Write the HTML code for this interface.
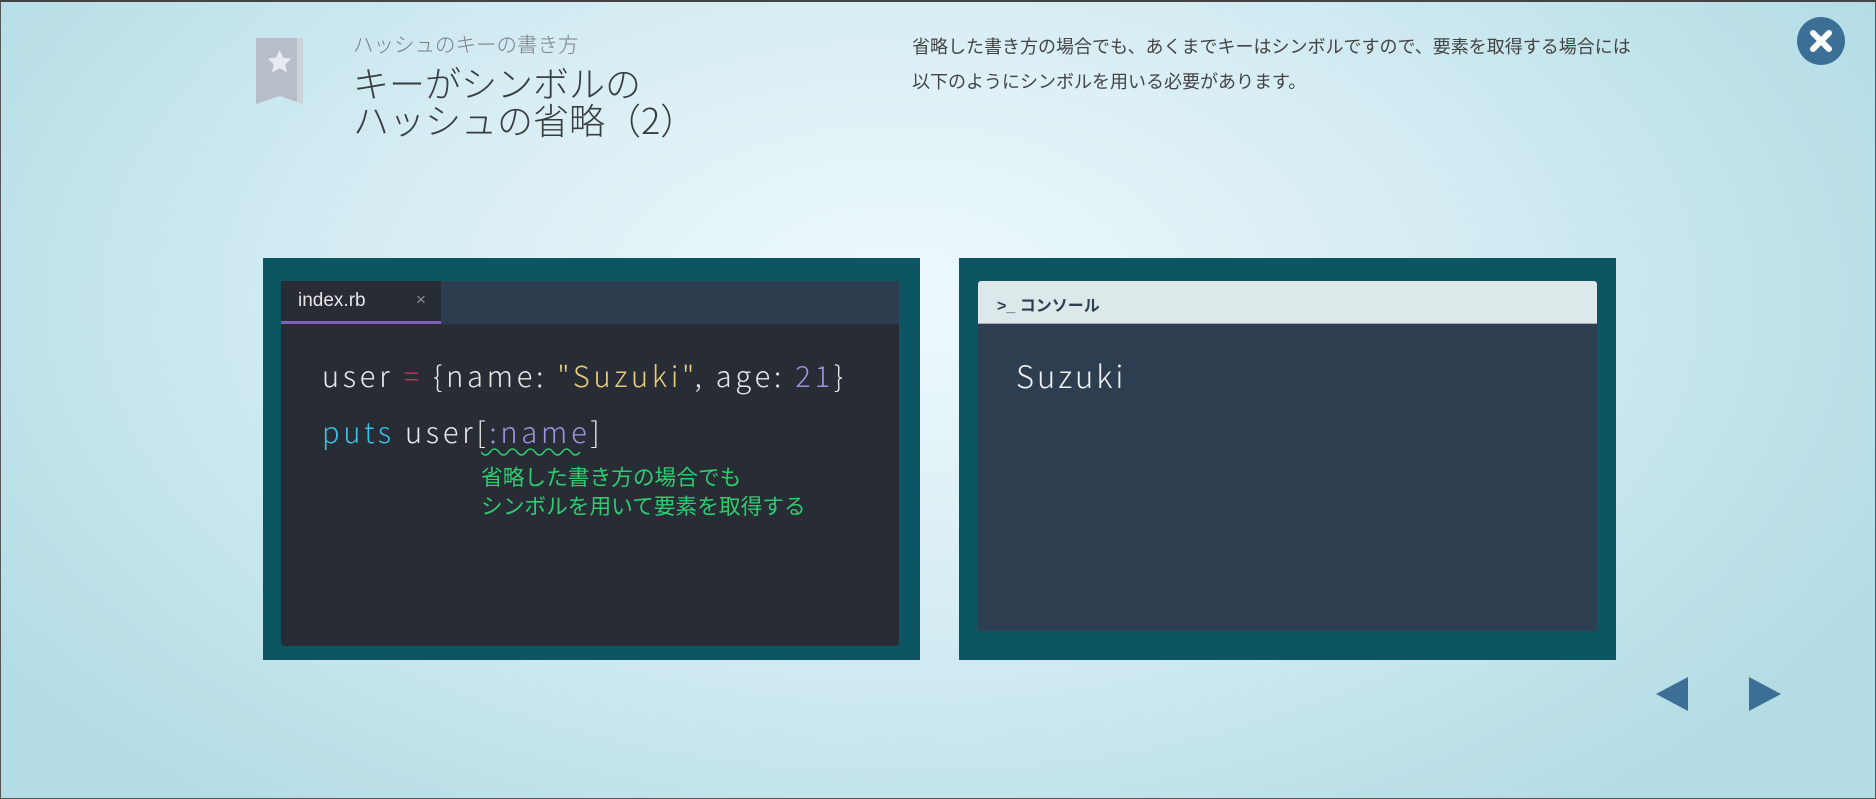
<!DOCTYPE html>
<html><head><meta charset="utf-8"><style>
*{margin:0;padding:0;box-sizing:border-box}
body{width:1876px;height:799px;overflow:hidden;position:relative;font-family:"Liberation Sans","Noto Sans CJK JP",sans-serif;
background:radial-gradient(ellipse 1100px 650px at 900px 300px,#eef9fc 0%,#d8eef4 45%,#b3dce5 100%);border:1px solid #555;border-top:2px solid #444}
.abs{position:absolute}
.panel{position:absolute;background:#0c5663}
.thin{font-family:"Noto Sans CJK JP","Liberation Sans",sans-serif;font-weight:300}
</style></head><body>
<svg class="abs" style="left:255px;top:36px" width="47" height="66" viewBox="0 0 47 66">
<path d="M0 0H47V66L23.5 58L0 66Z" fill="#b8bec8"/><path d="M41 0H47V66L41 64Z" fill="#cdd2d9"/>
<path d="M23.5 12l3.6 7.6 8.2 1-6 5.6 1.6 8.2-7.4-4.1-7.4 4.1 1.6-8.2-6-5.6 8.2-1z" fill="#e8ebef"/></svg>
<div class="abs thin" style="left:352px;top:26px;font-size:20.5px;color:#7a7f85">ハッシュのキーの書き方</div>
<div class="abs thin" style="left:352px;top:62px;font-size:36px;line-height:37px;color:#3a3d40">キーがシンボルの<br>ハッシュの省略（2）</div>
<div class="abs" style="left:911px;top:28px;font-size:18px;line-height:35px;color:#444">省略した書き方の場合でも、あくまでキーはシンボルですので、要素を取得する場合には<br>以下のようにシンボルを用いる必要があります。</div>
<svg class="abs" style="left:1796px;top:15px" width="48" height="48"><circle cx="24" cy="24" r="24" fill="#3b6f96"/><path d="M16 16L32 32M32 16L16 32" stroke="#fff" stroke-width="6" stroke-linecap="round"/></svg>

<div class="panel" style="left:262px;top:256px;width:657px;height:402px"></div>
<div class="abs" style="left:280px;top:279px;width:618px;height:365px;background:#282c34;border-radius:3px"></div>
<div class="abs" style="left:440px;top:279px;width:458px;height:43px;background:#2b3d4f"></div>
<div class="abs" style="left:280px;top:279px;width:160px;height:43px;background:#282c34;border-bottom:3px solid #7e5fc0"></div>
<div class="abs" style="left:297px;top:288px;font-size:19px;color:#e6e6e6">index.rb</div>
<div class="abs" style="left:415px;top:288px;font-size:17px;color:#8a8f96">×</div>
<div class="abs thin" style="left:321px;top:352px;font-size:29px;color:#e8e8e8;letter-spacing:3.8px;white-space:pre">user <span style="color:#e5254f">=</span> {name: <span style="color:#e6cd7a">"Suzuki"</span>, age: <span style="color:#a38ee0">21</span>}</div>
<div class="abs thin" style="left:321px;top:408px;font-size:29px;color:#e8e8e8;letter-spacing:3.8px;white-space:pre"><span style="color:#3cc0e8">puts</span> user[<span style="color:#a38ee0">:name</span>]</div>
<svg class="abs" style="left:480px;top:446px" width="104" height="10"><path d="M0 4q4.5 6 9 0t9 0t9 0t9 0t9 0t9 0t9 0t9 0t9 0t9 0t9 0" fill="none" stroke="#2ecc71" stroke-width="1.5"/></svg>
<div class="abs" style="left:480px;top:461px;font-size:21.7px;line-height:29px;color:#2ecc71">省略した書き方の場合でも<br>シンボルを用いて要素を取得する</div>

<div class="panel" style="left:958px;top:256px;width:657px;height:402px"></div>
<div class="abs" style="left:977px;top:279px;width:619px;height:350px;background:#2c3e50;border-radius:3px"></div>
<div class="abs" style="left:977px;top:279px;width:619px;height:43px;background:#dce8ea;border-radius:3px 3px 0 0;border-bottom:1px solid #aab"></div>
<div class="abs" style="left:996px;top:290px;font-size:16px;font-weight:bold;color:#2c3e50">&gt;_ コンソール</div>
<div class="abs thin" style="left:1015px;top:350px;font-size:31px;color:#f0f0f0;letter-spacing:3px">Suzuki</div>

<svg class="abs" style="left:1655px;top:675px" width="130" height="36"><path d="M32 0V34L0 17Z" fill="#3b6f96"/><path d="M93 0V34L125 17Z" fill="#3b6f96"/></svg>
</body></html>
